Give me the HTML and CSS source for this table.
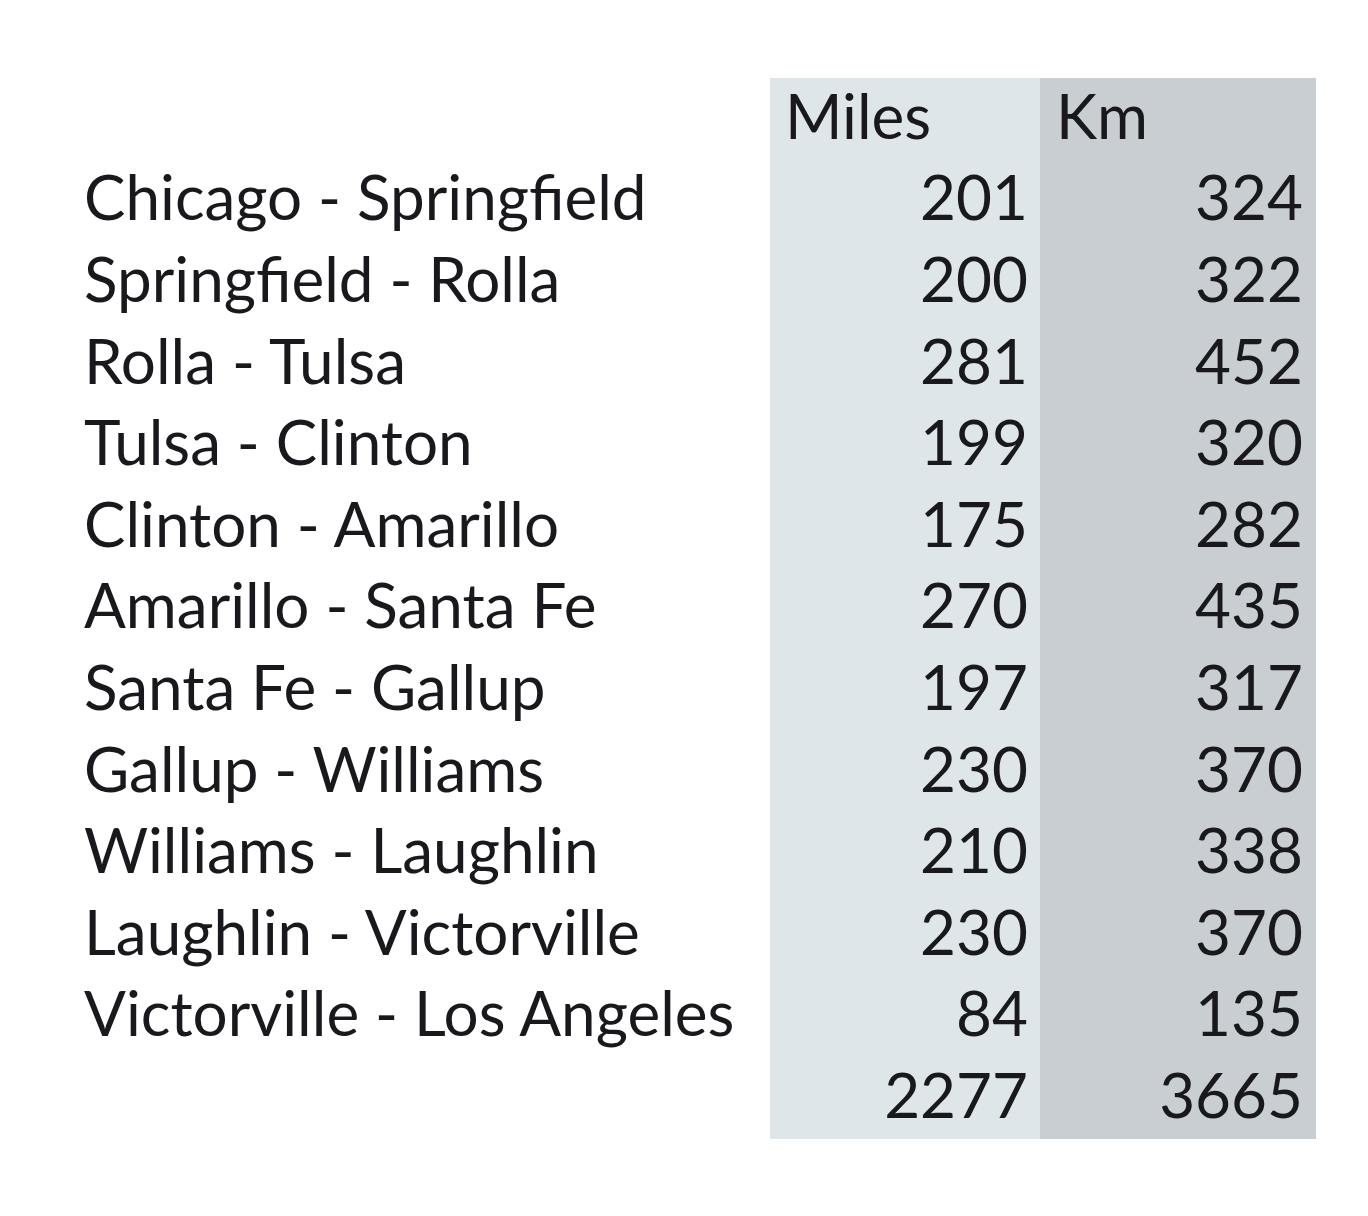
FILE: index.html
```html
<!DOCTYPE html>
<html lang="en">
<head>
<meta charset="utf-8">
<title>Route 66 distances</title>
<link rel="stylesheet" href="styles.css">
</head>
<body>
<div class="page">
  <table class="dist">
    <thead>
      <tr><th class="name"></th><th class="miles hd">Miles</th><th class="km hd">Km</th></tr>
    </thead>
    <tbody>
      <tr><td class="name">Chicago - Springfield</td><td class="miles">201</td><td class="km">324</td></tr>
      <tr><td class="name">Springfield - Rolla</td><td class="miles">200</td><td class="km">322</td></tr>
      <tr><td class="name">Rolla - Tulsa</td><td class="miles">281</td><td class="km">452</td></tr>
      <tr><td class="name">Tulsa - Clinton</td><td class="miles">199</td><td class="km">320</td></tr>
      <tr><td class="name">Clinton - Amarillo</td><td class="miles">175</td><td class="km">282</td></tr>
      <tr><td class="name">Amarillo - Santa Fe</td><td class="miles">270</td><td class="km">435</td></tr>
      <tr><td class="name">Santa Fe - Gallup</td><td class="miles">197</td><td class="km">317</td></tr>
      <tr><td class="name">Gallup - Williams</td><td class="miles">230</td><td class="km">370</td></tr>
      <tr><td class="name">Williams - Laughlin</td><td class="miles">210</td><td class="km">338</td></tr>
      <tr><td class="name">Laughlin - Victorville</td><td class="miles">230</td><td class="km">370</td></tr>
      <tr><td class="name">Victorville - Los Angeles</td><td class="miles">84</td><td class="km">135</td></tr>
      <tr><td class="name"></td><td class="miles">2277</td><td class="km">3665</td></tr>
    </tbody>
  </table>
</div>
</body>
</html>
```
FILE: styles.css
```css
html, body {
  margin: 0;
  padding: 0;
  background: #ffffff;
}
.page {
  padding: 78px 0 0 70px;
}
.dist {
  border-collapse: collapse;
  table-layout: fixed;
  font-family: Lato, "Liberation Sans", sans-serif;
  font-size: 62px;
  color: #19191d;
}
.dist tr {
  height: 81.6px;
}
.dist th, .dist td {
  padding: 0 0 8px 0;
  font-weight: normal;
  line-height: 1;
  vertical-align: middle;
  box-sizing: border-box;
}
.name {
  width: 700px;
  text-align: left;
  padding-left: 14px !important;
}
.miles {
  width: 270px;
  background: #dfe6e9;
  text-align: right;
  padding-right: 12px !important;
}
.km {
  width: 276px;
  background: #c9ced2;
  text-align: right;
  padding-right: 13px !important;
}
.miles.hd {
  text-align: left;
  padding-left: 15px !important;
}
.km.hd {
  text-align: left;
  padding-left: 16px !important;
}
```
